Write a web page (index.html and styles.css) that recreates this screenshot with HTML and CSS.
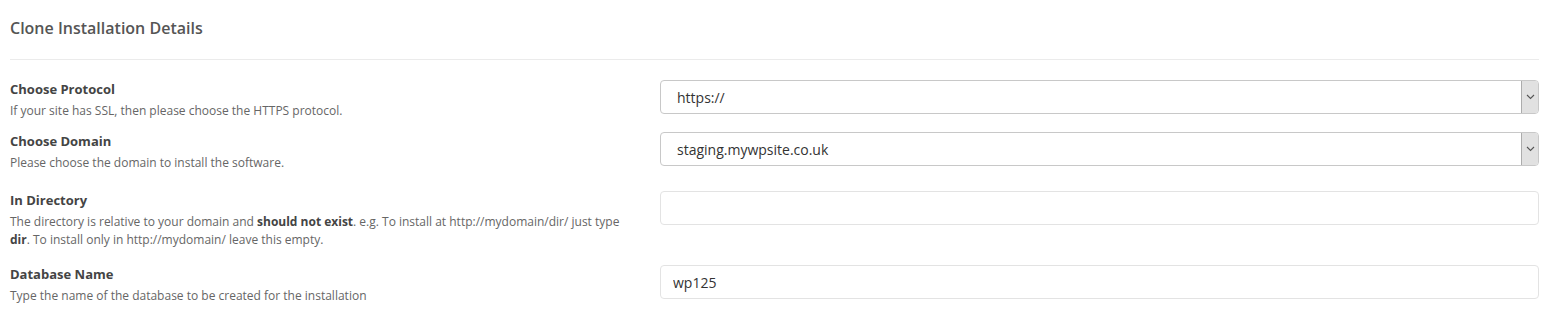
FILE: index.html
```html
<!DOCTYPE html>
<html lang="en">
<head>
    <meta charset="UTF-8">
    <title>Clone Installation Details</title>
    <link rel="stylesheet" href="styles.css">
</head>
<body>
    <div class="panel">
        <h3 class="panel-title">Clone Installation Details</h3>
        <hr class="divider">

        <div class="form-row row-first">
            <div class="field-info">
                <label class="field-label" for="protocol">Choose Protocol</label>
                <span class="field-help">If your site has SSL, then please choose the HTTPS protocol.</span>
            </div>
            <div class="select-wrap">
                <select id="protocol" class="form-control">
                    <option>https://</option>
                    <option>http://</option>
                    <option>https://www.</option>
                    <option>http://www.</option>
                </select>
                <span class="select-arrow">
                    <svg width="9" height="6" viewBox="0 0 9 6"><path d="M1 1l3.5 3.5L8 1" fill="none" stroke="#555" stroke-width="1.1"/></svg>
                </span>
            </div>
        </div>

        <div class="form-row row-second">
            <div class="field-info">
                <label class="field-label" for="domain">Choose Domain</label>
                <span class="field-help">Please choose the domain to install the software.</span>
            </div>
            <div class="select-wrap">
                <select id="domain" class="form-control">
                    <option>staging.mywpsite.co.uk</option>
                    <option>mywpsite.co.uk</option>
                </select>
                <span class="select-arrow">
                    <svg width="9" height="6" viewBox="0 0 9 6"><path d="M1 1l3.5 3.5L8 1" fill="none" stroke="#555" stroke-width="1.1"/></svg>
                </span>
            </div>
        </div>

        <div class="form-row">
            <div class="field-info">
                <label class="field-label" for="directory">In Directory</label>
                <span class="field-help">The directory is relative to your domain and <b>should not exist</b>. e.g. To install at http://mydomain/dir/ just type <b>dir</b>. To install only in http://mydomain/ leave this empty.</span>
            </div>
            <div>
                <input type="text" id="directory" class="form-control text-input" value="">
            </div>
        </div>

        <div class="form-row">
            <div class="field-info">
                <label class="field-label" for="dbname">Database Name</label>
                <span class="field-help">Type the name of the database to be created for the installation</span>
            </div>
            <div>
                <input type="text" id="dbname" class="form-control text-input" value="wp125">
            </div>
        </div>
    </div>
</body>
</html>
```

FILE: styles.css
```css
body {
    margin: 0;
    background-color: #fff;
    font-family: "Open Sans", sans-serif;
    color: #444;
}

.panel {
    padding: 0 22px 0 10px;
}

.panel-title {
    margin: 0;
    padding-top: 17px;
    font-size: 16px;
    font-weight: 600;
    line-height: 22px;
    color: #555;
}

.divider {
    margin: 20px 0 19px;
    border: 0;
    border-top: 1px solid #ebebeb;
}

.form-row {
    display: grid;
    grid-template-columns: 630px 1fr;
    column-gap: 20px;
    align-items: start;
    margin-bottom: 15px;
}

.row-first {
    margin-bottom: 11px;
}

.row-second {
    margin-bottom: 18px;
}

.field-label {
    display: block;
    font-size: 13px;
    font-weight: 700;
    line-height: 20px;
    color: #444;
}

.field-help {
    display: block;
    margin-top: 3px;
    font-size: 12px;
    line-height: 18px;
    color: #666;
}

.field-help b {
    color: #444;
}

.select-wrap {
    position: relative;
}

.form-control {
    display: block;
    box-sizing: border-box;
    width: 100%;
    height: 34px;
    margin-top: 1px;
    font-family: "Open Sans", sans-serif;
    font-size: 14px;
    color: #333;
    background-color: #fff;
    border-radius: 4px;
    outline: none;
}

select.form-control {
    appearance: none;
    -webkit-appearance: none;
    padding: 0 16px;
    border: 1px solid #c8c8c8;
}

.select-arrow {
    position: absolute;
    top: 2px;
    right: 1px;
    width: 16px;
    height: 32px;
    display: flex;
    align-items: center;
    justify-content: center;
    background-color: #e1e1e1;
    border-left: 1px solid #acacac;
    border-radius: 0 3px 3px 0;
}

.text-input {
    padding: 0 12px;
    border: 1px solid #e3e3e3;
}
```
